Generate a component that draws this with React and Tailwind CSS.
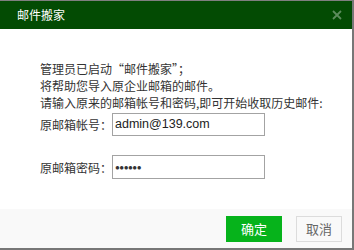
export default function App() {
  return (
    <div className="w-[354px] h-[250px] border-t border-t-[#7f7f7f] border-r-2 border-r-[#777] border-b-2 border-b-[#777] flex flex-col bg-white font-['Noto_Sans_CJK_SC','Liberation_Sans',sans-serif]">
      <div className="h-[28px] shrink-0 bg-[#034b03] flex items-center justify-between pl-[17px] pr-[10px]">
        <span className="text-[12px] text-white leading-none">邮件搬家</span>
        <svg width="10" height="10" viewBox="0 0 10 10">
          <path d="M1 1L9 9M9 1L1 9" stroke="#5d8c5d" strokeWidth="1.8" />
        </svg>
      </div>
      <div className="flex-1 pt-[31px] pl-[40px] text-[12px] text-[#333] leading-[17px]">
        <p>管理员已启动“邮件搬家”；</p>
        <p>将帮助您导入原企业邮箱的邮件。</p>
        <p>请输入原来的邮箱帐号和密码,即可开始收取历史邮件:</p>
        <div className="flex items-center mt-[2px]">
          <span className="w-[72px]">原邮箱帐号：</span>
          <div className="w-[153px] h-[23px] border border-[#a3a3a3] flex items-center pl-[2px] text-[12.5px] text-[#222] font-['Liberation_Sans',sans-serif]">
            admin@139.com
          </div>
        </div>
        <div className="flex items-center mt-[19px]">
          <span className="w-[72px]">原邮箱密码：</span>
          <div className="w-[153px] h-[24px] border border-[#a3a3a3] flex items-center pl-[2px] text-[8px] tracking-[-0.5px] text-[#333] font-['Liberation_Sans',sans-serif]">
            ●●●●●●
          </div>
        </div>
      </div>
      <div className="h-[39px] shrink-0 bg-[#f9f9f9] flex items-center justify-end gap-[14px] pr-[10px]">
        <button className="w-[56px] h-[26px] bg-[#06b31b] text-white text-[13px]">确定</button>
        <button className="w-[46px] h-[26px] border border-[#dcdcdc] bg-[#f9f9f9] text-[#666] text-[13px]">取消</button>
      </div>
    </div>
  )
}
